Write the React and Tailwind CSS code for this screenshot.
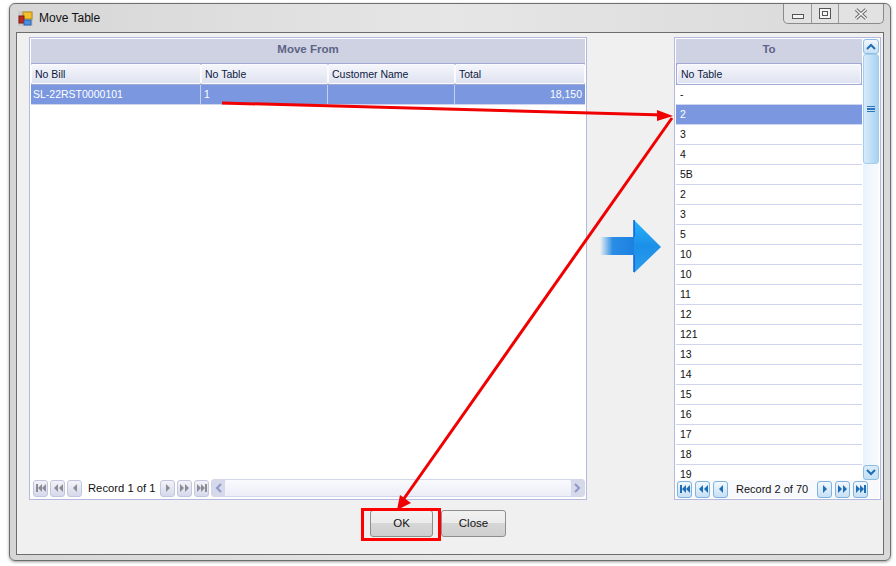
import React from 'react';

const toRows = ['-', '2', '3', '4', '5B', '2', '3', '5', '10', '10', '11', '12', '121', '13', '14', '15', '16', '17', '18', '19'];

const NavIcon = ({ type, color }) => {
  const shapes = {
    first: <><rect x="1" y="1" width="2" height="8" /><path d="M7 1v8L3 5z" /><path d="M11 1v8L7 5z" /></>,
    prev: <><path d="M6 1v8L2 5z" /><path d="M11 1v8L7 5z" /></>,
    back: <path d="M8 1v8L4 5z" />,
    next: <path d="M4 1v8l4-4z" />,
    forward: <><path d="M1 1v8l4-4z" /><path d="M6 1v8l4-4z" /></>,
    last: <><path d="M1 1v8l4-4z" /><path d="M5 1v8l4-4z" /><rect x="9" y="1" width="2" height="8" /></>,
  };
  return (
    <svg width="12" height="10" viewBox="0 0 12 10" fill={color}>
      {shapes[type]}
    </svg>
  );
};

const NavButton = ({ type, active }) => (
  <div
    className={
      active
        ? 'flex h-[17px] w-[15px] items-center justify-center rounded-[3px] border border-[#7fb2dc] bg-gradient-to-b from-[#f2f8fd] to-[#c5e0f5]'
        : 'flex h-[17px] w-[15px] items-center justify-center rounded-[3px] border border-[#c3c7de] bg-gradient-to-b from-[#f3f4f9] to-[#d5d9ea]'
    }
  >
    <NavIcon type={type} color={active ? '#1f6db5' : '#8c8c94'} />
  </div>
);

const HeaderCell = ({ className, children }) => (
  <div className={`flex items-center rounded-[1px] border border-[#fafbfe] bg-gradient-to-b from-[#f5f6fb] to-[#dfe2f0] pl-[3px] pt-[1px] text-[#0c1a3e] ${className}`}>
    {children}
  </div>
);

const LeftPanel = () => (
  <div className="flex h-[463px] w-[558px] flex-col border border-[#b4b9de] bg-white p-[1px]">
    <div className="flex h-[24px] items-center justify-center bg-[#cfd2e2] pb-[3px] text-[11.5px] font-bold text-[#5d6487]">Move From</div>
    <div className="flex h-[22px] border-y border-[#a3a9d2] bg-[#a3a9d2]">
      <HeaderCell className="w-[170px]">No Bill</HeaderCell>
      <HeaderCell className="w-[127px]">No Table</HeaderCell>
      <HeaderCell className="w-[127px]">Customer Name</HeaderCell>
      <HeaderCell className="flex-1">Total</HeaderCell>
    </div>
    <div className="flex h-[20px] items-center border-b border-[#d0d4ef] bg-[#7a97df] text-white">
      <div className="h-full w-[170px] border-r border-[#c5d0ef] pl-[2px] leading-[18px]">SL-22RST0000101</div>
      <div className="h-full w-[127px] border-r border-[#c5d0ef] pl-[3px] leading-[18px]">1</div>
      <div className="h-full w-[127px] border-r border-[#c5d0ef]" />
      <div className="h-full flex-1 pr-[3px] text-right leading-[18px]">18,150</div>
    </div>
    <div className="flex-1" />
    <div className="flex h-[19px] items-center pl-[2px] pb-[1px]">
      <div className="flex gap-[2px]">
        <NavButton type="first" />
        <NavButton type="prev" />
        <NavButton type="back" />
      </div>
      <div className="w-[78px] whitespace-nowrap pl-[6px] text-[11.25px] text-[#111]">Record 1 of 1</div>
      <div className="flex gap-[2px]">
        <NavButton type="next" />
        <NavButton type="forward" />
        <NavButton type="last" />
      </div>
      <div className="ml-[2px] flex h-[18px] flex-1 items-center rounded-[3px] border border-[#d3d6e8] bg-[#eef0f8]">
        <div className="flex h-full w-[13px] items-center justify-center bg-[#d5d9ea] text-[#8f97c8]">
          <svg width="7" height="10" viewBox="0 0 7 10" fill="none" stroke="currentColor" strokeWidth="2"><path d="M6 1 2 5l4 4" /></svg>
        </div>
        <div className="h-full flex-1 rounded-[3px] bg-gradient-to-b from-[#f9fafd] to-[#eceef7]" />
        <div className="flex h-full w-[13px] items-center justify-center bg-[#d5d9ea] text-[#8f97c8]">
          <svg width="7" height="10" viewBox="0 0 7 10" fill="none" stroke="currentColor" strokeWidth="2"><path d="m1 1 4 4-4 4" /></svg>
        </div>
      </div>
    </div>
  </div>
);

const RightPanel = () => (
  <div className="flex h-[463px] w-[207px] flex-col border border-[#b4b9de] bg-white p-[1px]">
    <div className="flex h-[441px] overflow-hidden">
      <div className="flex w-[187px] flex-col">
        <div className="flex h-[24px] shrink-0 items-center justify-center bg-[#cfd2e2] pb-[3px] text-[11.5px] font-bold text-[#5d6487]">To</div>
        <div className="flex h-[22px] shrink-0 border-y border-[#a3a9d2] bg-[#a3a9d2] px-[1px]">
          <HeaderCell className="flex-1">No Table</HeaderCell>
        </div>
        {toRows.map((row, index) => (
          <div
            key={index}
            className={
              index === 1
                ? 'h-[20px] shrink-0 border-b border-[#d0d4ef] bg-[#7a97df] pl-[4px] leading-[18px] text-white'
                : 'h-[20px] shrink-0 border-b border-[#d0d4ef] pl-[4px] leading-[18px] text-[#111]'
            }
          >
            {row}
          </div>
        ))}
      </div>
      <div className="ml-[1px] flex w-[16px] flex-col bg-gradient-to-r from-[#e9f3fc] to-[#f8fbfe]">
        <div className="flex h-[15px] items-center justify-center rounded-[3px] border border-[#8fbde2] bg-gradient-to-b from-[#f2f8fd] to-[#c5e0f5]">
          <svg width="10" height="7" viewBox="0 0 10 7" fill="none" stroke="#1f6db5" strokeWidth="2"><path d="m1 6 4-4 4 4" /></svg>
        </div>
        <div className="flex h-[110px] items-center justify-center rounded-[3px] border border-[#a5cdec] bg-gradient-to-r from-[#d8ebfa] to-[#a8d2f2]">
          <div className="h-[6px] w-[8px] border-y border-[#2f77b8] bg-[linear-gradient(transparent_1px,#2f77b8_1px,#2f77b8_3px,transparent_3px)]" />
        </div>
        <div className="flex-1" />
        <div className="flex h-[15px] items-center justify-center rounded-[3px] border border-[#8fbde2] bg-gradient-to-b from-[#d8ebfa] to-[#c5e0f5]">
          <svg width="10" height="7" viewBox="0 0 10 7" fill="none" stroke="#1f6db5" strokeWidth="2"><path d="m1 1 4 4 4-4" /></svg>
        </div>
      </div>
    </div>
    <div className="flex flex-1 items-center bg-[#f8f9fd] pl-[1px]">
      <div className="flex gap-[3px]">
        <NavButton type="first" active />
        <NavButton type="prev" active />
        <NavButton type="back" active />
      </div>
      <div className="w-[89px] whitespace-nowrap pl-[8px] text-[11px] text-[#111]">Record 2 of 70</div>
      <div className="flex gap-[3px]">
        <NavButton type="next" active />
        <NavButton type="forward" active />
        <NavButton type="last" active />
      </div>
    </div>
  </div>
);

const BlueArrow = () => (
  <svg width="64" height="56" viewBox="0 0 64 56">
    <defs>
      <linearGradient id="shaft" x1="0" x2="1" y1="0" y2="0">
        <stop offset="0" stopColor="#2a8ee6" stopOpacity="0" />
        <stop offset="0.35" stopColor="#2a8ee6" />
        <stop offset="1" stopColor="#1b7fe0" />
      </linearGradient>
      <linearGradient id="head" x1="0" x2="0" y1="0" y2="1">
        <stop offset="0" stopColor="#25b3fb" />
        <stop offset="0.5" stopColor="#1c8fe8" />
        <stop offset="1" stopColor="#2d9fec" />
      </linearGradient>
    </defs>
    <rect x="0" y="18" width="36" height="18" fill="url(#shaft)" />
    <path d="M34 1 61 28 34 54z" fill="url(#head)" />
    <path d="M34 1v17M34 36v17" stroke="#0a5fdc" strokeWidth="1.5" />
  </svg>
);

export default function App() {
  return (
    <div className="relative h-[566px] w-[896px] overflow-hidden bg-white text-[10.5px] [font-family:'Liberation_Sans',sans-serif]">
      <div className="ml-[9px] mt-[3px] flex h-[558px] w-[882px] flex-col rounded-[6px] border border-[#6e6e6e] bg-gradient-to-r from-[#d6d6d6] via-[#e6e6e6] to-[#d9d9d9] shadow-[0_1px_3px_rgba(0,0,0,0.4)]">
        <div className="flex h-[28px] shrink-0 items-start">
          <div className="flex h-full items-center pl-[8px]">
            <svg width="15" height="15" viewBox="0 0 15 15">
              <rect width="15" height="15" fill="#c9c9c9" />
              <rect x="5" y="1" width="9" height="7" fill="#f2c12e" stroke="#b58a10" />
              <rect x="1" y="5" width="5" height="7" fill="#c4281c" stroke="#7e1a12" />
              <rect x="6" y="9" width="7" height="5" fill="#4b8fe0" stroke="#2c63a8" />
            </svg>
            <span className="pl-[6px] text-[12px] text-[#111]">Move Table</span>
          </div>
          <div className="ml-auto mr-[6px] flex h-[20px] w-[101px] rounded-b-[5px] border-x border-b border-[#8a8a8a] bg-[#e2e2e2]">
            <div className="flex w-[28px] items-end justify-center border-r border-[#9a9a9a] pb-[4px]">
              <div className="h-[5px] w-[12px] border border-[#555] bg-[#f4f4f4]" />
            </div>
            <div className="flex w-[27px] items-center justify-center border-r border-[#9a9a9a]">
              <div className="flex h-[11px] w-[12px] items-center justify-center border border-[#555] bg-[#f4f4f4]">
                <div className="h-[5px] w-[6px] border border-[#555]" />
              </div>
            </div>
            <div className="flex flex-1 items-center justify-center">
              <svg width="14" height="12" viewBox="0 0 14 12" fill="none">
                <path d="m2 1.5 10 9M12 1.5l-10 9" stroke="#666" strokeWidth="3.4" />
                <path d="m2 1.5 10 9M12 1.5l-10 9" stroke="#f2f2f2" strokeWidth="1.6" />
              </svg>
            </div>
          </div>
        </div>
        <div className="mx-[6px] flex h-[523px] w-[868px] flex-col border border-[#6d6d6d] bg-[#f0f0f0]">
          <div className="flex pl-[12px] pt-[4px]">
            <LeftPanel />
            <div className="flex w-[87px] items-center justify-center pb-[44px] pl-[2px]">
              <BlueArrow />
            </div>
            <RightPanel />
          </div>
          <div className="flex gap-[8px] pl-[353px] pt-[10px]">
            <button className="h-[27px] w-[63px] rounded-[3px] border border-[#8e8e8e] bg-[linear-gradient(#f2f2f2_0%,#ebebeb_50%,#d6d6d6_50%,#cfcfcf_100%)] text-[11.5px] text-[#111]">OK</button>
            <button className="h-[27px] w-[65px] rounded-[3px] border border-[#8e8e8e] bg-[linear-gradient(#f2f2f2_0%,#ebebeb_50%,#d6d6d6_50%,#cfcfcf_100%)] text-[11.5px] text-[#111]">Close</button>
          </div>
        </div>
      </div>

      {/* red annotations drawn on top of the screenshot */}
      <div className="absolute left-[361px] top-[508px] h-[33px] w-[80px] border-[3px] border-[#ff0000]" />
      <svg className="absolute left-0 top-0" width="896" height="566" viewBox="0 0 896 566" fill="none">
        <path d="M222 103 664 115" stroke="#f00000" strokeWidth="3" />
        <path d="M673 116 657 110v11z" fill="#f00000" />
        <path d="M672 118 403 500" stroke="#f00000" strokeWidth="3" />
        <path d="M397 510 400 495 411 503z" fill="#f00000" />
      </svg>
    </div>
  );
}
